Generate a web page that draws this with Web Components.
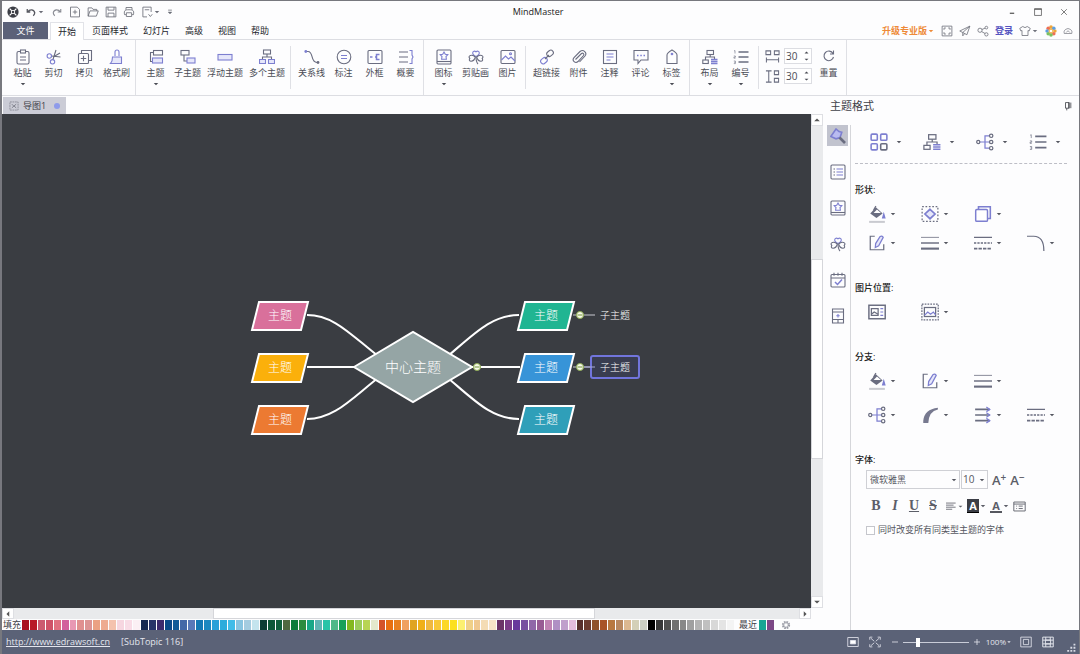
<!DOCTYPE html>
<html lang="zh-CN">
<head>
<meta charset="utf-8">
<title>MindMaster</title>
<style>
  html, body { margin: 0; height: 100%; }
  body { font: 9px/14px "Open Sans", "Noto Sans CJK SC", sans-serif; color: #3f4148; background: #fdfdfe; }
</style>
</head>
<body>
<mm-app></mm-app>

<script>
const G = 'stroke="#6a6d80"', P = 'stroke="#7d7fd0"', L = 'fill="#e6e7fa"';
const ICONS = {
  caret: '<path d="M3.500 6h9L8 10.500z" fill="currentColor" stroke="none"/>',
  logo: '<circle cx="8" cy="8" r="7.500" fill="#3c3e46" stroke="none"/><path d="M3.500 3.500l9 9M12.500 3.500l-9 9" stroke="#fff" stroke-width="1.600"/><circle cx="8" cy="8" r="2.200" fill="#3c3e46" stroke="#fff"/>',
  undo: '<path d="M3 4v4h4M3.500 8C6 4 12 4 13 9c0 2-1 3-2 4" stroke="#55575f" stroke-width="1.700"/>',
  redo: '<path d="M13 4v4H9M12.500 8C10 4 4 4 3 9c0 2 1 3 2 4" stroke="#8a8c94" stroke-width="1.500"/>',
  add: '<path d="M2 1.500h9l3 3v10H2zM8 5v6M5 8h6"/>',
  open: '<path d="M1.500 13.500v-11h5l1.500 2h5v2M1.500 13.500l2.500-7h11l-2.500 7z"/>',
  save: '<path d="M1.500 1.500h13v13h-13zM4 1.500v4h8v-4M4 14.500v-5h8v5"/>',
  print: '<path d="M4 5V2h8v3M4 11.500H2c-1-6 1-6.500 6-6.500s7 .5 6 6.500h-2M4.500 9h7v5h-7z"/>',
  export: '<path d="M13.500 8V1.500h-11v13H8M5 5h6M10 11l2.500 3 2.500-3"/>',
  more: '<path d="M3 3h10" stroke-width="2"/><path d="M3 8h10l-5 5z" fill="currentColor"/>',
  paste: `<rect x="2" y="2.500" width="12" height="12.500" rx="1.500" ${G}/><rect x="5.500" y="1" width="5" height="3" ${G} fill="#fff"/><path d="M5 8h6M5 11h6" ${G}/>`,
  cut: `<path d="M10 1L6.800 11M5.500 7L14.500 8M8 7.500l6-3.500" ${G}/><circle cx="3.300" cy="7" r="2.200" ${P}/><circle cx="6.500" cy="12.800" r="2.200" ${P}/>`,
  copy: `<path d="M4.500 4.500v-3h10v10h-3" ${G}/><rect x="1.500" y="4.500" width="10" height="10" rx="1" ${G}/><path d="M6.500 6.800v5.400M3.800 9.500h5.400" ${G}/>`,
  brush: `<path d="M6 7V3q0-2 2-2t2 2v4" ${P}/><path d="M3.500 8h9v6.500h-11q2-2 2-6.500z" ${P} ${L}/>`,
  topic: `<rect x="5.500" y="1.500" width="9" height="4.500" ${G}/><path d="M5.500 3.500h-3v9h3" ${G}/><rect x="4.500" y="9" width="10" height="5" ${P} ${L}/>`,
  subtopic: `<rect x="1" y="1.500" width="8" height="4.500" ${G}/><path d="M4 6v6h3" ${G}/><rect x="7" y="9" width="8" height="5" ${P} ${L}/>`,
  floating: `<rect x="1" y="5.500" width="14" height="5.500" ${P} ${L}/>`,
  multi: `<rect x="4.500" y="1" width="7" height="4" ${G}/><path d="M8 5v3M3.500 10.500V8h9v2.500" ${G}/><path d="M.5 10.500h6v4h-6zM9.500 10.500h6v4h-6z" ${P} ${L}/>`,
  relation: `<path d="M2 2.500h2c6 0 2 11 9 11" ${G}/><circle cx="1.800" cy="2.500" r="1.400" fill="#7d7fd0" stroke="none"/><circle cx="14" cy="13.500" r="1.400" fill="#6a6d80" stroke="none"/>`,
  callout: `<circle cx="8" cy="8" r="6.800" ${G}/><path d="M5 6.500h6M5 9.500h6" ${P}/>`,
  boundary: `<rect x="1" y="1.500" width="14" height="13" rx="1" ${G}/><path d="M3 8h2.500M8 8h1M12.500 5.500h-3v5h3" ${P} stroke-width="1.500"/>`,
  summary: `<path d="M1 3h9M1 8h9M1 13h9" ${G}/><path d="M11.500 1.500h2.500v4.500l1 2-1 2v4.500h-2.500" ${P}/>`,
  mark: `<rect x="1" y="1" width="14" height="14" rx="1" ${G}/><path d="M1 12.500h14" ${G}/><path d="M8 3l1.300 2.300 2.500.4-1.800 1.800.4 2.700H5.600L6 7.500 4.200 5.700l2.500-.4z" ${P}/>`,
  clipart: `<path d="M8 7.500C2.500 5 5 .5 8 2.800c3-2.300 5.500 2.200 0 4.700z" ${P}/><path d="M7.300 8C4 4.500-.8 7 1.800 9.500c-2.300 3.300 4 4.500 5.500-1.500zM8.700 8c3.300-3.500 8.100-1 5.500 1.500 2.300 3.300-4 4.500-5.500-1.500z" ${G}/><path d="M8 8c0 3 0 5 2 7" ${G}/>`,
  picture: `<rect x="1" y="1.500" width="14" height="13" rx="1" ${G}/><path d="M1.500 11l4-4 3 3 2.500-2 4 4" ${P}/><circle cx="10.500" cy="4.800" r="1" ${P}/>`,
  link: `<rect x="8" y="2" width="7" height="5" rx="2.500" transform="rotate(-40 11 5)" ${G}/><rect x="1" y="9" width="7" height="5" rx="2.500" transform="rotate(-40 5 11)" ${P}/><path d="M6 10l4-4" ${G}/>`,
  attach: `<path d="M4.500 10.500l6-6c1.500-1 3 .5 2 2L7 12.500c-2.500 2.500-6.500-1-4-3.800L9 2.500c3.500-2.800 7.500 1.500 5 4.500l-5.500 6" ${G}/>`,
  note: `<rect x="1.500" y="1.500" width="13" height="13" ${G}/><path d="M4.500 5h7M4.500 8h7M4.500 11h4" ${P}/>`,
  comment: `<path d="M1 1.500h14v9.500H8l-3 3.500V11H1z" ${G}/><path d="M4 6.500h1.500M7.300 6.500h1.500M10.500 6.500H12" ${P} stroke-width="1.600"/>`,
  tag: `<path d="M3 14.500V6q0-2 5-5 5 3 5 5v8.500z" ${G}/><circle cx="8" cy="5" r=".8" ${P}/>`,
  layout: `<rect x="5" y="1.500" width="6.500" height="4" ${G}/><path d="M8.200 5.500V8M3.500 11V8h9v2" ${G}/><rect x=".8" y="11" width="5.500" height="3.500" ${G}/><path d="M9 10.500h6.500M9 12.500h6.500M9 14.500h6.500" ${P} stroke-width="1.400"/>`,
  numbers: `<path d="M5.500 3h10M5.500 8h10M5.500 13h10" ${G} stroke-width="1.400"/><path d="M1 2l1-.5v3M.8 7h1.600v1.200H.9v1h1.600M.8 12h1.600v2.600H.8M1.200 13.300h1.200" ${G} stroke-width=".6"/>`,
  hspace: `<path d="M1 2h5v4H1zM10 2h5v4h-5zM1.500 9v5.500M14.500 9v5.500M1.500 11.500h13" ${G}/>`,
  vspace: `<path d="M1 2h6M1 14h6M4 2v12M10 2h4.500v4H10zM10 10h4.500v4H10z" ${G}/>`,
  reset: `<path d="M12.500 1.500V5H9M12 4.500A4.800 4.800 0 1 0 12.500 8" ${G}/>`,
  expand: '<path d="M1.500 1.500h13v13h-13zM4 6.500V4h2.500M9.500 4H12v2.500M12 9.500V12H9.500M6.500 12H4V9.500"/>',
  plane: '<path d="M14.500 1.500L1 8l4 2 9.500-8.500-4 11.500L5 10v4.500l2.500-3"/>',
  share: '<circle cx="4" cy="7" r="2.800"/><circle cx="12.500" cy="3.500" r="1.800"/><circle cx="12.500" cy="12.500" r="2.200"/><path d="M6.500 6l4.300-1.800M6.200 8.800l4.500 2.500"/>',
  shirt: '<path d="M5 2L1 4.500 2.500 8 4 7.300V14h8V7.300l1.500.7L15 4.500 11 2q-3 3-6 0z"/>',
  flower: '<g stroke="none"><g fill="#f0a63a"><circle cx="8" cy="2.800" r="2.400"/><circle cx="13.200" cy="8" r="2.400"/></g><g fill="#ee6f55"><circle cx="4.300" cy="4.300" r="2.400"/><circle cx="11.700" cy="11.700" r="2.400"/></g><g fill="#5d9fe0"><circle cx="11.700" cy="4.300" r="2.400"/><circle cx="2.800" cy="8" r="2.400"/></g><g fill="#7cc060"><circle cx="4.300" cy="11.700" r="2.400"/><circle cx="8" cy="13.200" r="2.400"/></g><circle cx="8" cy="8" r="3.200" fill="#f0b050"/><circle cx="8" cy="8" r="1.800" fill="#fff"/></g>',
  fold: '<path d="M2 12q-2-6 6-8 8 2 6 8zM5 10.500L8 7.500l3 3"/>',
  min: '<path d="M4.500 10h7" stroke-width="1.800"/>',
  max: '<path d="M2.500 2.500h11v11h-11zM2.500 4h11"/>',
  close: '<path d="M3.500 3.500l9 9M12.500 3.500l-9 9"/>',
  doc: '<rect x="1.500" y="1.500" width="13" height="13" stroke-dasharray="3 1"/><path d="M4.500 5l3 3M11.500 5l-7 6M8 8l3.500 3" stroke-width="1.400"/>',
  pin: '<path d="M4 2.500h6v9H4zM9 2.500v9M12.500 2.500v9M6 11.500V15" stroke-width="1.300"/>',
  roller: `<path d="M.8 8.500L6 1l3 2.500 2.800.8L10 9.500 6 10.800z" ${P} fill="#b9bbf0" stroke-width="1.600"/><path d="M9.500 9.500l5.500 5.500" ${G} stroke-width="2.600"/>`,
  list: `<rect x="1" y="1" width="14" height="14" rx="1" ${G}/><path d="M3.500 5H5M3.500 8H5M3.500 11H5" ${G}/><path d="M6.500 5H13M6.500 8H13M6.500 11H13" ${P}/>`,
  task: `<rect x="1" y="2.500" width="14" height="12.500" rx="1" ${G}/><path d="M1 6h14M4 .8v3M8 .8v3M12 .8v3" ${G}/><path d="M5 10l2.500 2.500L12 7.500" ${P} stroke-width="1.500"/>`,
  slides: `<path d="M2.500 1h11v14h-11zM2.500 4h11M2.500 11.500h11M8 11.500V15" ${G}/><path d="M6.300 7.800h3.400M8 6v3.500" ${P}/>`,
  grid: `<g stroke-width="1.400"><rect x="1" y="1" width="5.500" height="5.500" rx="1" ${P}/><rect x="9.500" y="1" width="5.500" height="5.500" rx="1" ${P}/><rect x="1" y="9.500" width="5.500" height="5.500" rx="1" ${P}/><rect x="9.500" y="9.500" width="5.500" height="5.500" rx="1" ${G}/></g>`,
  tree: `<path d="M3.500 8h9M12 2.500H8v11h4" ${P}/><g ${G} fill="#fff"><circle cx="2" cy="8" r="1.400"/><circle cx="13.500" cy="2.500" r="1.500"/><circle cx="13.500" cy="8" r="1.500"/><circle cx="13.500" cy="13.500" r="1.500"/></g>`,
  fill: `<path d="M7 2l6 5.500-5.500 4L2 7.500z" fill="#6a6d80" stroke="none"/><path d="M5 7L8 4l3.500 3z" fill="#fff" stroke="none"/><path d="M5 4.500L7 1" ${G}/><path d="M14 8l1 3.500h-2z" fill="#7d7fd0" ${P}/><path d="M1 15h14" stroke="#c9cad0" stroke-width="1.800"/>`,
  shape: `<rect x="1" y="1.500" width="14" height="13" ${G} stroke-dasharray="1.500 1.500"/><path d="M8 3.800L12.500 8 8 12.200 3.500 8z" ${P} ${L} stroke-width="1.500"/>`,
  shadow: `<path d="M4 3.500V1.500h10.500v10.500h-2" ${P} stroke-width="1.400"/><rect x="1.500" y="4" width="10.500" height="10.500" rx="1" ${P} fill="#fff" stroke-width="1.300"/>`,
  pen: `<path d="M6 2H2v12h12V9" ${G}/><path d="M10.500 2.500q2-1.500 3 .5L9.500 10.500 6.500 12l.3-3.500z" ${P} ${L}/>`,
  weight: `<path d="M0 3h16" ${G} stroke-width=".7"/><path d="M0 8h16" ${G} stroke-width="1.300"/><path d="M0 13h16" ${G} stroke-width="1.900"/>`,
  dash: `<path d="M0 3h16" ${G}/><path d="M0 8h16" ${G} stroke-dasharray="2 1" stroke-width="1.300"/><path d="M0 13h16" ${G} stroke-dasharray="3 1" stroke-width="1.600"/>`,
  corner: `<path d="M0 2h6q9 0 9 13" ${G}/>`,
  picpos: `<rect x=".8" y="2" width="14.500" height="12" ${G} stroke-width="1.300"/><rect x="3" y="5" width="6" height="6" ${G}/><path d="M3 10l2.500-2 3.500 2" ${G}/><path d="M11 5h2.500M11 8h2.500M11 11h2.500" ${P}/>`,
  picfit: `<rect x=".8" y="1" width="14.500" height="14" ${G} stroke-dasharray="1.500 1"/><rect x="3" y="4" width="10" height="8" ${G}/><path d="M3 11l3-3 2.500 2L11 8l2 2.500" ${P}/>`,
  taper: `<path d="M2 15V13Q3 3 15 1.500V3Q7 4.500 6.500 15z" fill="#77798f" stroke="none"/>`,
  arrows: `<path d="M1 3h13M1 8h13M1 13h13" ${G} stroke-width="1.400"/><path d="M11 1l3 2-3 2M11 6l3 2-3 2M11 11l3 2-3 2" ${P}/>`,
  align: '<path d="M0 3h14M0 6h11M0 9h14M0 12h9" stroke-width="1.200"/>',
  table: '<path d="M1 2.500h14v11H1zM1 5h14M4 7.500h1M7 7.500h5M4 10.500h1M7 10.500h5"/>',
  gear: '<circle cx="8" cy="8" r="5" stroke="#9a9ca6" stroke-width="3.200" stroke-dasharray="2.600 1.330"/><circle cx="8" cy="8" r="3.500" stroke="#9a9ca6"/>',
  fitpage: '<path d="M1 2h14v12H1z"/><path d="M4.500 6h7v4.500h-7z" fill="#fff"/>',
  full: '<path d="M1 5V1.500h3.500M11.500 1.500H15V5M15 11v3.500h-3.500M4.500 14.500H1V11M2.500 3L7 7M13.500 3L9 7M13.500 13L9 9M2.500 13L7 9"/>',
  minus: '<path d="M2 8h12" stroke-width="1.600"/>',
  plus: '<path d="M2 8h12M8 2v12" stroke-width="1.600"/>',
  single: '<path d="M1 1.500h14v13H1zM4.500 4.500h7v7h-7z"/>',
  overview: '<path d="M1 1.500h14v13H1zM1 5.500h14M1 10.500h14M5 1.500v4M11 1.500v4M5 10.500v4M11 10.500v4M4.500 5.500h7v5h-7z" stroke-width="1.300"/>',
  grip: '<g fill="#d8dae4" stroke="none"><path d="M12 1h3v3h-3zM12 6h3v3h-3zM12 11h3v3h-3zM7 6h3v3H7zM7 11h3v3H7zM2 11h3v3H2z"/></g>'
};
const BASE = `
  * { box-sizing: border-box; }
  button, input, select { font: inherit; color: inherit; margin: 0; padding: 0; border: 0; background: none; border-radius: 0; }
  button { display: flex; align-items: center; justify-content: center; }
`;
function define(name, css, render) {
  customElements.define(name, class extends HTMLElement {
    constructor() { super(); this.attachShadow({ mode: 'open' }); }
    connectedCallback() {
      const t = document.createElement('template');
      t.innerHTML = `<style>${BASE}${css}</style>${render(this)}`;
      this.shadowRoot.replaceChildren(t.content.cloneNode(true));
    }
  });
}
const a = (el, n, d = '') => el.getAttribute(n) ?? d;
const icon = (n, s = 16) => `<mm-icon name="${n}" size="${s}"></mm-icon>`;
const caret = icon('caret', 8);

define('mm-icon', ':host{display:block;flex:none} svg{display:block}', el => {
  const s = a(el, 'size', 16);
  return `<svg width="${s}" height="${s}" viewBox="0 0 16 16" fill="none" stroke="currentColor" stroke-width="1.1" aria-hidden="true">${ICONS[a(el, 'name')]}</svg>`;
});

define('mm-icon-button', ':host{display:block;flex:none} button{gap:var(--gap,0)}', el =>
  `<button aria-label="${a(el, 'label')}">${icon(a(el, 'icon'), a(el, 'size', 12))}${el.hasAttribute('menu') ? caret : ''}</button>`);

define('mm-title-bar', `
  :host{display:grid;grid-template-columns:1fr auto 1fr;align-items:center;height:21px;padding:0 10px 0 5px;color:#6a6c76}
  h1{margin:0;font-size:9px;font-weight:400;line-height:14px;color:#222}
  .quick{display:flex;align-items:center;gap:6px}
  .win{display:flex;justify-content:flex-end;gap:16px;color:#444}
`, () => `<div class="quick">
  ${icon('logo', 12)}
  <mm-icon-button icon="undo" label="撤销" menu></mm-icon-button>
  ${[['redo','重做'],['add','新建'],['open','打开'],['save','保存'],['print','打印']].map(([i,l]) => `<mm-icon-button icon="${i}" label="${l}"></mm-icon-button>`).join('')}
  <mm-icon-button icon="export" label="导出" menu></mm-icon-button>
  <mm-icon-button icon="more" label="自定义" size="6"></mm-icon-button>
  </div><h1>MindMaster</h1>
  <div class="win"><mm-icon-button icon="min" label="最小化" size="10"></mm-icon-button><mm-icon-button icon="max" label="最大化" size="10"></mm-icon-button><mm-icon-button icon="close" label="关闭" size="10"></mm-icon-button></div>`);

define('mm-menu-bar', `
  :host{display:flex;align-items:stretch;height:18px;padding-left:1px;border-bottom:1px solid #dcdde2;color:#24262c}
  nav{display:flex;flex:1}
  button{padding:0 7px 0 8px}
  .file{width:45px;padding:0;background:#5b6178;color:#fff;margin-right:2px}
  .on{border:1px solid #e2e3e8;border-bottom:0;background:#fff;margin-bottom:-1px;padding:0 7px}
  .tools{display:flex;align-items:center;gap:6px;padding-right:6px;color:#70727c}
  .tools a{text-decoration:none;font-weight:700;color:#5553c0}
  .tools .up{padding:0;color:#ee8a38;font-weight:700}
`, () => `<nav><button class="file">文件</button><button class="on">开始</button>${['页面样式','幻灯片','高级','视图','帮助'].map(t => `<button>${t}</button>`).join('')}</nav>
  <div class="tools"><button class="up">升级专业版${caret}</button>
  <mm-icon-button icon="expand" label="全屏"></mm-icon-button><mm-icon-button icon="plane" label="发送"></mm-icon-button><mm-icon-button icon="share" label="分享"></mm-icon-button>
  <a href="#login">登录</a><mm-icon-button icon="shirt" label="皮肤" menu></mm-icon-button><mm-icon-button icon="flower" label="社区"></mm-icon-button><mm-icon-button icon="fold" label="折叠" size="10"></mm-icon-button></div>`);

define('mm-tool', `
  :host{display:block}
  button{flex-direction:column;justify-content:flex-start;min-width:31px;padding:9px 3px 0;white-space:nowrap}
  span{margin-top:1px}
`, el => `<button>${icon(a(el, 'icon'), 16)}<span><slot></slot></span>${el.hasAttribute('menu') ? caret : ''}</button>`);

define('mm-tool-group', `
  :host{display:flex;padding:0 2px 0 4px;position:relative;border-right:1px solid #dfe0e5}
  :host([short]){border-right-color:transparent}
  :host([short])::after{content:"";position:absolute;right:-1px;top:6px;bottom:6px;width:1px;background:#dfe0e5}
`, () => '<slot></slot>');

define('mm-spin', `
  :host{display:flex;align-items:center;gap:4px}
  .box{display:flex;width:28px;height:16px;border:1px solid #dcdde2;background:#fff}
  input{width:17px;padding-left:1px;font-size:10px;min-width:0}
  .s{display:flex;flex-direction:column;justify-content:space-evenly;flex:1}
  .s button{height:5px} .s button:first-child{transform:rotate(180deg)}
`, el => `${icon(a(el, 'icon'), 15)}<div class="box"><input type="text" aria-label="${a(el, 'label')}" value="30"><div class="s"><button aria-label="增加">${icon('caret', 7)}</button><button aria-label="减少">${icon('caret', 7)}</button></div></div>`);

const tools = list => list.map(([i, t, m]) => `<mm-tool icon="${i}" ${m ? 'menu' : ''}>${t}</mm-tool>`).join('');
define('mm-ribbon', `
  :host{display:flex;height:56px;border-bottom:1px solid #dcdde2;padding-left:1px;color:#4a4c55}
  .spins{display:flex;flex-direction:column;gap:4px;padding:8px 0 0 2px}
  .last mm-tool{padding-left:1px}
`, () => `
  <mm-tool-group>${tools([['paste','粘贴',1],['cut','剪切'],['copy','拷贝'],['brush','格式刷']])}</mm-tool-group>
  <mm-tool-group short>${tools([['topic','主题',1],['subtopic','子主题'],['floating','浮动主题'],['multi','多个主题']])}</mm-tool-group>
  <mm-tool-group>${tools([['relation','关系线'],['callout','标注'],['boundary','外框'],['summary','概要']])}</mm-tool-group>
  <mm-tool-group short>${tools([['mark','图标',1],['clipart','剪贴画'],['picture','图片']])}</mm-tool-group>
  <mm-tool-group>${tools([['link','超链接'],['attach','附件'],['note','注释'],['comment','评论'],['tag','标签',1]])}</mm-tool-group>
  <mm-tool-group short>${tools([['layout','布局',1],['numbers','编号',1]])}</mm-tool-group>
  <mm-tool-group class="last"><div class="spins"><mm-spin icon="hspace" label="水平间距"></mm-spin><mm-spin icon="vspace" label="垂直间距"></mm-spin></div><mm-tool icon="reset">重置</mm-tool></mm-tool-group>`);

define('mm-doc-tabs', `
  :host{display:flex;height:18px;padding:1px 0 0 1px}
  button{gap:4px;padding:0 6px;background:#cbccd6}
  i{width:6px;height:6px;margin-left:4px;border-radius:50%;background:#8e9bea}
  mm-icon{color:#777985}
`, () => `<button>${icon('doc', 10)}导图1<i></i></button>`);

define('mm-scrollbar', `
  :host{display:flex;flex:none;background:#e9eaec}
  :host([vertical]){flex-direction:column;width:12px}
  :host(:not([vertical])){height:11px}
  button{flex:none;width:12px;height:12px;background:#fff;border:1px solid #dedfe3;color:#555}
  :host(:not([vertical])) button{height:11px}
  .thumb{background:#fff;border:1px solid #d5d6da}
`, el => {
  const [b, t, e] = a(el, 'parts').split(' ');
  const [r1, r2] = el.hasAttribute('vertical') ? [180, 0] : [90, -90];
  const c = r => `<mm-icon name="caret" size="10" style="transform:rotate(${r}deg)"></mm-icon>`;
  return `<button aria-label="后退">${c(r1)}</button><div style="flex:${b}"></div><div class="thumb" style="flex:${t}"></div><div style="flex:${e}"></div><button aria-label="前进">${c(r2)}</button>`;
});

define('mm-node', `
  :host{position:absolute;left:var(--x);top:var(--y);display:grid;place-items:center;color:#fff;white-space:nowrap;font-weight:300}
  svg,span{grid-area:1/1} svg{display:block}
  .topic{font-size:12px;line-height:16px} .center{font-size:14px;line-height:20px}
  .sub{font-size:10px;line-height:14px;padding:3px 8px;border:2px solid transparent}
  .sel{border-color:#7175dc;border-radius:3px;background:#393d50}
`, el => {
  const k = a(el, 'kind'), f = a(el, 'fill');
  const s = k === 'topic' ? `<svg width="60" height="32"><path d="M9 2h49l-7 28H2z" fill="${f}" stroke="#fff" stroke-width="2"/></svg>`
    : k === 'center' ? `<svg width="122" height="74"><path d="M2 37L61 2l59 35-59 35z" fill="#95a5a5" stroke="#fff" stroke-width="2"/></svg>` : '';
  return `${s}<span class="${k} ${el.hasAttribute('selected') ? 'sel' : ''}"><slot></slot></span>`;
});

define('mm-canvas', `
  :host{display:block;position:relative;flex:1;min-width:0;min-height:340px;background:#3a3d42;overflow:hidden}
  .map{position:absolute;left:246px;top:184px;width:396px;height:140px}
  .map>svg{display:block}
  .badge{position:absolute;inset:0}
`, () => {
  const n = (x, y, f) => `<mm-node kind="topic" fill="${f}" style="--x:${x}px;--y:${y}px">主题</mm-node>`;
  const b = (x, y) => `<g transform="translate(${x} ${y})"><circle r="3.500" fill="#f6f9e8" stroke="#8fae52"/><path d="M-2.500 0h5" stroke="#6f8f3a"/></g>`;
  return `<div class="map"><svg width="396" height="140" fill="none" stroke="#fff" stroke-width="2">
    <path d="M59 17C86 17 103 37 130 58M59 69h48M59 121C86 121 103 101 130 80M200 58C227 35 244 17 271 17M224 69h48M200 80c27 23 44 41 71 41"/>
    <path d="M325 17h22M325 69h22" stroke="#c8cad0" stroke-width="1"/></svg>
    ${n(2,2,'#d9709b')}${n(2,54,'#fbb00b')}${n(2,106,'#ec7a32')}${n(268,2,'#20b592')}${n(268,54,'#3794d8')}${n(268,106,'#2f9fb9')}
    <mm-node kind="center" style="--x:104px;--y:32px">中心主题</mm-node>
    <mm-node kind="sub" style="--x:342px;--y:5px">子主题</mm-node>
    <mm-node kind="sub" selected style="--x:342px;--y:57px">子主题</mm-node>
    <svg class="badge" width="396" height="140">${b(229,69)}${b(332,17)}${b(332,69)}<path d="M336 69h11" stroke="#a9abd8"/></svg></div>`;
});

const COLORS = ('a81020 b81828 cc5a70 cf5268 e07080 d2609c e898b4 e09090 dc9494 eba183 eeab90 f4c2ae f6d6e0 f8dce6 fbf0f4 ' +
  '142850 283468 3c2a6c 0a4a88 105c98 4468a8 5878b8 1478b4 1c88c0 28a0d8 2cacdc 40bce8 88c4e0 a4cce0 c4e4ee ' +
  '0c3c34 0c5838 10603c 506840 0c7c3c 2c8c40 18a888 60b4b4 28c4a8 50b888 18a058 84b820 9ccc5c b8d454 e4e8cc ' +
  'd45428 e87010 e88020 f0a060 e0a420 f0b018 f0b840 f8c838 fcd828 fce020 fcf070 f0d088 f0c890 f4dcb4 f8e4c8 ' +
  '6c3468 7c3c88 68389c 7850a0 9068a8 985c94 c084b4 b090c4 c0a0cc e4bcdc ' +
  '58302c 6c3c30 90542c a85428 b87840 b88860 dcb890 d4d0b8 ccd0c4 ' +
  '000000 383838 505050 707070 888888 a0a0a0 b4b4b4 c0c0c0 d8d8d8 e4e4e4 f4f4f4').split(' ');
define('mm-palette', `
  :host{display:flex;align-items:center;height:11px;padding:0 32px 0 1px;background:#fdfdfe}
  span{line-height:11px}
  .row{display:flex;flex:1;gap:1px;margin:0 5px 0 1px}
  .row button{flex:1;height:10px;min-width:0}
  .recent{display:flex;gap:1px;margin:0 7px 0 2px} .recent button{width:7px;height:10px}
`, () => {
  const s = c => `<button aria-label="#${c}" style="background:#${c}"></button>`;
  return `<span>填充</span><div class="row">${COLORS.map(s).join('')}</div><span>最近</span><div class="recent">${s('18a594')}${s('7c4886')}</div><mm-icon-button icon="gear" label="设置" size="10"></mm-icon-button>`;
});

define('mm-side-tabs', `
  :host{display:flex;flex:none;flex-direction:column;gap:15px;width:28px;padding:0 0 0 4px;border-right:1px solid #d5d6da}
  button{width:21px;height:21px}
  .on{background:#c1c3ce}
`, () => [['roller','格式'],['list','大纲'],['mark','图标'],['clipart','剪贴画'],['task','任务'],['slides','幻灯片']].map(([i, l], k) => `<button class="${k ? '' : 'on'}" aria-label="${l}">${icon(i, 16)}</button>`).join(''));

define('mm-section', `
  :host{display:block;margin-top:var(--top,24px)}
  h3{margin:0 0 3px;font-size:9px;line-height:14px;font-weight:500;color:#222}
  .grid{display:grid;grid-template-columns:repeat(4,53px);grid-auto-rows:28px;align-items:center;row-gap:var(--row,1px);padding-left:13px}
`, el => `${a(el, 'heading') ? `<h3>${a(el, 'heading')}:</h3>` : ''}<div class="grid"><slot></slot></div>`);

define('mm-font', `
  :host{display:block;margin-top:24px}
  h3{margin:0 0 3px;font-size:9px;line-height:14px;font-weight:500;color:#222}
  .body{padding-left:11px}
  .r{display:flex;align-items:center}
  .sel{display:flex;align-items:center;border:1px solid #cfd0d5;height:19px;position:relative}
  .sel+.sel{margin-left:1px}
  select{appearance:none;width:100%;height:17px;padding-left:3px;line-height:17px}
  .sel mm-icon{position:absolute;right:1px;pointer-events:none}
  .name{width:94px}.size{width:27px}.size select{font-size:10px;padding-left:1px}
  .r button{font-size:13px;line-height:18px;color:#5c5e68}
  .r .big{margin-left:4px;font-weight:600} sup{font-size:10px;line-height:10px;margin-bottom:6px}
  .fmt{margin-top:7px;height:20px;gap:7px;padding-left:4px}
  .fmt button{font-family:"Liberation Serif","Noto Sans CJK SC",serif;font-size:14px;font-weight:700;min-width:12px}
  .fmt .sans{font:700 11px/13px "Open Sans",sans-serif}
  .fmt .sans span{min-width:12px;text-align:center} .back span{background:#3c3e46;color:#fff;border-bottom:1px solid #000}
  .fore span{border-bottom:2px solid #55575f;line-height:11px}
  .fmt .sans,.fmt .al{margin-right:-4px}
  label{display:flex;align-items:center;gap:3px;margin-top:7px}
  input{appearance:none;width:9px;height:9px;border:1px solid #c5c6cc;background:#fff}
`, () => `<h3>字体:</h3><div class="body"><div class="r">
  <div class="sel name"><select aria-label="字体"><option>微软雅黑</option></select>${caret}</div>
  <div class="sel size"><select aria-label="字号"><option>10</option></select>${caret}</div>
  <button class="big" aria-label="增大字号">A<sup>+</sup></button><button class="big" aria-label="减小字号">A<sup>−</sup></button></div>
  <div class="r fmt"><button>B</button><button><i>I</i></button><button><u>U</u></button><button><s>S</s></button>
  <button class="al" aria-label="对齐">${icon('align', 11)}${icon('caret', 7)}</button>
  <button class="sans back"><span>A</span>${caret}</button><button class="sans fore"><span>A</span>${caret}</button>
  <button aria-label="更多">${icon('table', 13)}</button></div>
  <label><input type="checkbox">同时改变所有同类型主题的字体</label></div>`);

const cells = s => s.split(' ').map(n => { const m = n.endsWith('+'); const i = m ? n.slice(0, -1) : n; return `<mm-icon-button icon="${i}" label="${i}" size="18" ${m ? 'menu' : ''}></mm-icon-button>`; }).join('');
define('mm-format-panel', `
  :host{display:flex;flex-direction:column;flex:none;width:256px}
  header{display:flex;align-items:center;justify-content:space-between;height:19px;padding:0 6px 0 7px}
  h2{margin:0;font-size:11px;line-height:16px;font-weight:400}
  .body{display:flex;flex:1;margin-top:10px}
  .content{flex:1;min-width:0;padding:3px 12px 0 4px;color:#6a6c76}
  mm-section,mm-font{--gap:3px;color:#555761}
  .top{--top:0;--gap:7px;margin-left:2px}
  hr{margin:7px 0 0;border:0;border-top:1px dashed #bdbec6}
  mm-icon-button{justify-self:start}
`, () => `<header><h2>主题格式</h2><mm-icon-button icon="pin" label="固定" size="10"></mm-icon-button></header>
  <div class="body"><mm-side-tabs></mm-side-tabs><div class="content">
  <mm-section class="top">${cells('grid+ layout+ tree+ numbers+')}</mm-section><hr>
  <mm-section heading="形状" style="--top:19px">${cells('fill+ shape+ shadow+')}<i></i>${cells('pen+ weight+ dash+ corner+')}</mm-section>
  <mm-section heading="图片位置">${cells('picpos picfit+')}</mm-section>
  <mm-section heading="分支" style="--row:6px">${cells('fill+ pen+ weight+')}<i></i>${cells('tree+ taper+ arrows+ dash+')}</mm-section>
  <mm-font></mm-font></div></div>`);

define('mm-status-bar', `
  :host{display:flex;align-items:center;height:24px;padding:0 3px 0 4px;background:#5b6277;color:#e4e6ee}
  a{color:inherit;margin-right:11px} .sp{flex:1}
  .z{display:flex;align-items:center;gap:10px}
  .zoom{display:flex;align-items:center;gap:4px}
  input{appearance:none;width:66px;height:12px;background:linear-gradient(#c9ccd8,#c9ccd8) center/100% 1px no-repeat}
  input::-webkit-slider-thumb{appearance:none;width:4px;height:9px;background:#fff}
  .pct{font-size:8px;margin:0 -2px 0 -5px} .g{align-self:flex-end;margin:0 0 1px 12px}
`, () => `<a href="http://www.edrawsoft.cn">http://www.edrawsoft.cn</a><span>[SubTopic 116]</span><div class="sp"></div>
  <div class="z"><mm-icon-button icon="fitpage" label="适合页面"></mm-icon-button><mm-icon-button icon="full" label="全屏"></mm-icon-button>
  <div class="zoom"><mm-icon-button icon="minus" label="缩小" size="8"></mm-icon-button><input type="range" aria-label="缩放" min="0" max="100" value="22"><mm-icon-button icon="plus" label="放大" size="8"></mm-icon-button></div>
  <button class="pct">100%${icon('caret', 6)}</button><mm-icon-button icon="single" label="单页"></mm-icon-button><mm-icon-button icon="overview" label="总览"></mm-icon-button></div>
  <span class="g">${icon('grip', 10)}</span>`);

define('mm-app', `
  :host{display:flex;flex-direction:column;min-height:100vh;box-sizing:border-box;border:solid #77787e;border-width:1px 1px 0 2px}
  main{display:flex;flex:1}
  .left{display:flex;flex-direction:column;flex:1;min-width:0}
  .view{display:flex;flex:1}
  .h{padding-right:12px}
`, () => `<mm-title-bar></mm-title-bar><mm-menu-bar></mm-menu-bar><mm-ribbon></mm-ribbon>
  <main><div class="left"><mm-doc-tabs></mm-doc-tabs>
  <div class="view"><mm-canvas></mm-canvas><mm-scrollbar vertical parts="134 198 138"></mm-scrollbar></div>
  <div class="h"><mm-scrollbar parts="199 381 205"></mm-scrollbar></div><mm-palette></mm-palette></div>
  <mm-format-panel></mm-format-panel></main><mm-status-bar></mm-status-bar>`);
</script>
</body>
</html>
